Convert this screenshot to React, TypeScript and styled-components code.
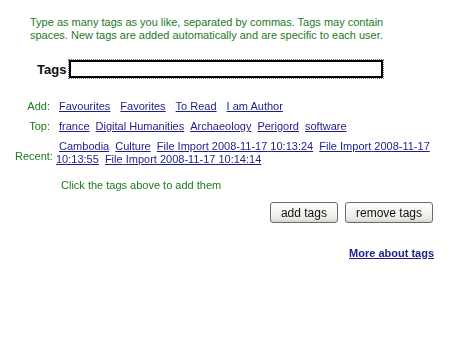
import React, { useState } from "react";
import styled, { createGlobalStyle } from "styled-components";

const GlobalStyle = createGlobalStyle`
  html, body {
    margin: 0;
    padding: 0;
    background: #fff;
  }
  body {
    font-family: "Liberation Sans", Arial, sans-serif;
    font-size: 11px;
  }
`;

const Page = styled.div`
  width: 450px;
  height: 360px;
  padding: 16px 16px 0 30px;
  box-sizing: border-box;
`;

const Intro = styled.p`
  margin: 0;
  width: 360px;
  color: #1d7a1d;
  font-size: 11px;
  line-height: 13px;
`;

const TagsRow = styled.div`
  display: flex;
  align-items: center;
  gap: 3px;
  margin: 18px 0 0 7px;
`;

const TagsLabel = styled.label`
  font-size: 13px;
  font-weight: bold;
  color: #111;
`;

const TagsInput = styled.input`
  width: 314px;
  height: 18px;
  box-sizing: border-box;
  border: 2px solid #000;
  outline: 1px dotted #777;
  padding: 0 4px;
  font-family: inherit;
  font-size: 12px;
`;

const Suggestions = styled.div`
  display: grid;
  grid-template-columns: 35px 1fr;
  column-gap: 6px;
  margin: 22px 0 0 -15px;
  width: 420px;
`;

const RowLabel = styled.div<{ $tall?: boolean }>`
  color: #1d7a1d;
  text-align: right;
  line-height: 13px;
  align-self: center;
  margin-bottom: ${(p) => (p.$tall ? "0" : "7px")};
`;

const Links = styled.div<{ $tall?: boolean }>`
  line-height: 13px;
  margin-bottom: 7px;
  padding-left: ${(p) => (p.$tall ? "0" : "3px")};
`;

const TagLink = styled.a<{ $gap: number }>`
  color: #1e1e88;
  text-decoration: underline;
  margin-right: ${(p) => p.$gap}px;
  cursor: pointer;
`;

const NoWrap = styled.span`
  white-space: nowrap;
`;

const Hint = styled.div`
  color: #1d7a1d;
  margin: 6px 0 0 31px;
`;

const Actions = styled.div`
  display: flex;
  justify-content: flex-end;
  gap: 7px;
  width: 403px;
  margin-top: 11px;
`;

const Button = styled.button`
  height: 21px;
  padding: 0 10px;
  font-family: "Liberation Sans", Arial, sans-serif;
  font-size: 12px;
  color: #111;
  border: 1px solid #6b6b6b;
  border-radius: 3px;
  background: linear-gradient(#ffffff, #ecebe6 80%, #d6d3cc);
`;

const More = styled.div`
  width: 404px;
  text-align: right;
  margin-top: 24px;
`;

const MoreLink = styled.a`
  color: #1e1e88;
  font-weight: bold;
  font-size: 11px;
  text-decoration: underline;
`;

const addTags = ["Favourites", "Favorites", "To Read", "I am Author"];
const topTags = ["france", "Digital Humanities", "Archaeology", "Perigord", "software"];
const recentTags = [
  "Cambodia",
  "Culture",
  "File Import 2008-11-17 10:13:24",
  "File Import 2008-11-17 10:13:55",
  "File Import 2008-11-17 10:14:14",
];

// keep dates like 2008-11-17 from breaking at the hyphens
const renderTag = (tag: string) =>
  tag.split(" ").map((word, i, all) => (
    <React.Fragment key={i}>
      {word.includes("-") ? <NoWrap>{word}</NoWrap> : word}
      {i < all.length - 1 ? " " : ""}
    </React.Fragment>
  ));

export default function App() {
  const [value, setValue] = useState("");

  const pick = (tag: string) => {
    setValue((v) => (v.trim() ? v.replace(/,?\s*$/, ", ") + tag : tag));
  };

  return (
    <Page>
      <GlobalStyle />
      <Intro>
        Type as many tags as you like, separated by commas. Tags may contain
        spaces. New tags are added automatically and are specific to each user.
      </Intro>
      <TagsRow>
        <TagsLabel htmlFor="tags">Tags</TagsLabel>
        <TagsInput id="tags" value={value} autoFocus onChange={(e) => setValue(e.target.value)} />
      </TagsRow>
      <Suggestions>
        <RowLabel>Add:</RowLabel>
        <Links>
          {addTags.map((t) => (
            <TagLink key={t} $gap={10} onClick={() => pick(t)}>{t}</TagLink>
          ))}
        </Links>
        <RowLabel>Top:</RowLabel>
        <Links>
          {topTags.map((t) => (
            <TagLink key={t} $gap={6} onClick={() => pick(t)}>{t}</TagLink>
          ))}
        </Links>
        <RowLabel $tall>Recent:</RowLabel>
        <Links $tall>
          &nbsp;
          {recentTags.map((t) => (
            <React.Fragment key={t}>
              <TagLink $gap={3} onClick={() => pick(t)}>{renderTag(t)}</TagLink>{" "}
            </React.Fragment>
          ))}
        </Links>
      </Suggestions>
      <Hint>Click the tags above to add them</Hint>
      <Actions>
        <Button>add tags</Button>
        <Button>remove tags</Button>
      </Actions>
      <More>
        <MoreLink href="#">More about tags</MoreLink>
      </More>
    </Page>
  );
}
